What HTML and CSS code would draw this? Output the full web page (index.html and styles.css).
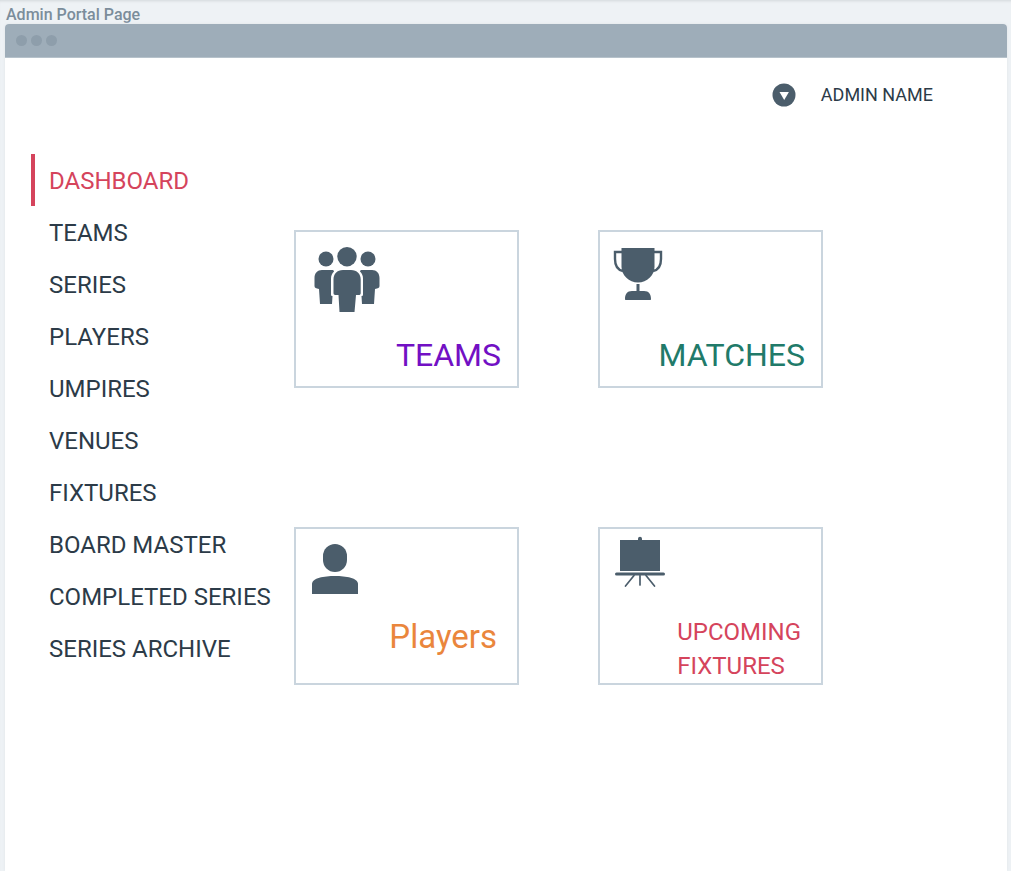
FILE: index.html
```html
<!DOCTYPE html>
<html lang="en">
<head>
<meta charset="utf-8">
<meta name="viewport" content="width=device-width, initial-scale=1">
<title>Admin Portal Page</title>
<link rel="stylesheet" href="styles.css">
</head>
<body>
<h1 class="page-title">Admin Portal Page</h1>
<div class="window">
  <div class="titlebar"><span class="dot"></span><span class="dot"></span><span class="dot"></span></div>
  <header class="topbar">
    <button class="account" type="button">
      <svg class="account-icon" viewBox="0 0 24 24" aria-hidden="true"><circle cx="12" cy="12" r="11.5" fill="#4b5d6b"/><path d="M7.500 9h9.400l-4.700 8z" fill="#fff"/></svg>
      <span>ADMIN NAME</span>
    </button>
  </header>
  <div class="content">
    <nav class="menu" aria-label="Main">
      <a class="menu-item active" href="#dashboard" aria-current="page">DASHBOARD</a>
      <a class="menu-item" href="#teams">TEAMS</a>
      <a class="menu-item" href="#series">SERIES</a>
      <a class="menu-item" href="#players">PLAYERS</a>
      <a class="menu-item" href="#umpires">UMPIRES</a>
      <a class="menu-item" href="#venues">VENUES</a>
      <a class="menu-item" href="#fixtures">FIXTURES</a>
      <a class="menu-item" href="#board">BOARD MASTER</a>
      <a class="menu-item" href="#completed">COMPLETED SERIES</a>
      <a class="menu-item" href="#archive">SERIES ARCHIVE</a>
    </nav>
    <main class="cards">
      <a class="card" href="#teams">
        <svg class="icon icon-teams" viewBox="0 0 66 66" aria-hidden="true">
          <g fill="#4b5d6b">
            <circle cx="12" cy="12" r="7.5"/><circle cx="54" cy="12" r="7.5"/><circle cx="33" cy="9.7" r="9.7"/>
            <path d="M8 23h10c1.500 0 2 .7 2 1.500-2 2-3 4-3 7v16c0 1 .6 1.500 1.500 1.500L18 57H6L5 42c-3-.5-4.500-1-4.500-3V31c0-5 3-8 7.500-8z"/>
            <path d="M58 23H48c-1.500 0-2 .7-2 1.500 2 2 3 4 3 7v16c0 1-.6 1.500-1.500 1.500l.5 8h12l1-15c3-.5 4.500-1 4.500-3V31c0-5-3-8-7.500-8z"/>
            <path d="M29 23h8c6 0 9.700 4 9.700 9.500V46c0 1.500-.7 2-2 2H42l-1.500 17h-15L24.500 48h-3c-1.500 0-2-.7-2-2V32.500C19.500 27 23 23 29 23z"/>
          </g>
        </svg>
        <span class="label label-teams">TEAMS</span>
      </a>
      <a class="card" href="#matches">
        <svg class="icon icon-matches" viewBox="0 0 50 54" aria-hidden="true">
          <path d="M9 5H2v7c0 7 2.500 11 8 12M41 5h7v7c0 7-2.500 11-8 12" fill="none" stroke="#4b5d6b" stroke-width="2.400"/>
          <path d="M8.500 1h33v19c0 8-7.500 15.500-16.500 15.500S8.500 28 8.500 20z" fill="#4b5d6b"/>
          <path d="M23.500 37h3v7H31c5 0 7 3.500 7 8 0 .8-.3 1-1 1H13c-.7 0-1-.2-1-1 0-4.500 2-8 7-8h4.500z" fill="#4b5d6b"/>
        </svg>
        <span class="label label-matches">MATCHES</span>
      </a>
      <a class="card" href="#players">
        <svg class="icon icon-players" viewBox="0 0 48 52" aria-hidden="true">
          <rect x="12" y="1" width="24" height="28" rx="12" fill="#4b5d6b"/>
          <path d="M1 51V41c0-6 12-8 23-8s23 2 23 8v10z" fill="#4b5d6b"/>
        </svg>
        <span class="label label-players">Players</span>
      </a>
      <a class="card" href="#upcoming">
        <svg class="icon icon-fixtures" viewBox="0 0 52 52" aria-hidden="true">
          <path d="M6 4h18V2.800a2 2 0 0 1 4 0V4h18v31H6z" fill="#4b5d6b"/>
          <path d="M2.500 38h47" stroke="#4b5d6b" stroke-width="3" stroke-linecap="round"/>
          <path d="M20 39.500L11.500 50M32 39.500L40.500 50M26 39.500V49" stroke="#4b5d6b" stroke-width="1.700" stroke-linecap="round"/>
        </svg>
        <span class="label label-fixtures">UPCOMING<br>FIXTURES</span>
      </a>
    </main>
  </div>
</div>
</body>
</html>
```
FILE: styles.css
```css
* { box-sizing: border-box; }
body {
  margin: 0;
  min-height: 100vh;
  padding: 5px 4px 0 5px;
  display: flex;
  flex-direction: column;
  background: #eef2f5;
  box-shadow: inset 0 3px 3px -2px #d2d7da;
  color: #2c3b48;
  font-family: Roboto, "Liberation Sans", sans-serif;
}
a { color: inherit; text-decoration: none; }
.page-title {
  margin: 0;
  padding-left: 1px;
  font-size: 16px;
  line-height: 19px;
  font-weight: 500;
  color: #7b8d9b;
}
.window {
  flex: 1;
  background: #fff;
  border-radius: 4px 4px 0 0;
  box-shadow: 0 0 3px #dfe5e9;
}
.titlebar {
  display: flex;
  align-items: center;
  gap: 4px;
  height: 34px;
  padding-left: 11px;
  background: #9eadb9;
  border-bottom: 1px solid #b6c2cb;
  border-radius: 4px 4px 0 0;
}
.dot { width: 11px; height: 11px; border-radius: 50%; background: #8e9eab; }
.topbar {
  display: flex;
  justify-content: flex-end;
  padding: 23px 74px 0 0;
  height: 96px;
}
.account {
  display: flex;
  align-items: center;
  align-self: flex-start;
  gap: 25px;
  padding: 0;
  border: 0;
  background: none;
  color: inherit;
  font: inherit;
  font-size: 18px;
  line-height: 28px;
}
.account-icon { width: 24px; height: 24px; }
.content { display: flex; padding: 0 184px 40px 26px; }
.menu { flex: 0 0 263px; }
.menu-item {
  display: block;
  padding: 2px 0 0 14px;
  border-left: 4px solid transparent;
  font-size: 24px;
  line-height: 50px;
  white-space: nowrap;
}
.menu-item.active { color: #d5445c; border-color: #d5445c; }
.cards {
  flex: 1;
  display: grid;
  grid-template-columns: 1fr 1fr;
  gap: 139px 79px;
  align-content: start;
  padding-top: 76px;
}
.card {
  display: flex;
  flex-direction: column;
  justify-content: space-between;
  min-height: 158px;
  border: 2px solid #cad5de;
}
.icon { display: block; }
.icon-teams { width: 66px; height: 66px; margin: 15px 0 0 18px; }
.icon-matches { width: 50px; height: 54px; margin: 15px 0 0 13px; }
.icon-players { width: 48px; height: 52px; margin: 14px 0 0 15px; }
.icon-fixtures { width: 52px; height: 52px; margin: 7px 0 0 14px; }
.label { align-self: flex-end; font-size: 32px; line-height: 40px; }
.label-teams { margin: 0 16px 11px; color: #7210c4; }
.label-matches { margin: 0 16px 11px; color: #217a69; }
.label-players { margin: 0 20px 26px; font-size: 33px; color: #ea863c; }
.label-fixtures { margin: 0 20px 0; font-size: 24px; line-height: 34px; color: #d5445c; }
```
